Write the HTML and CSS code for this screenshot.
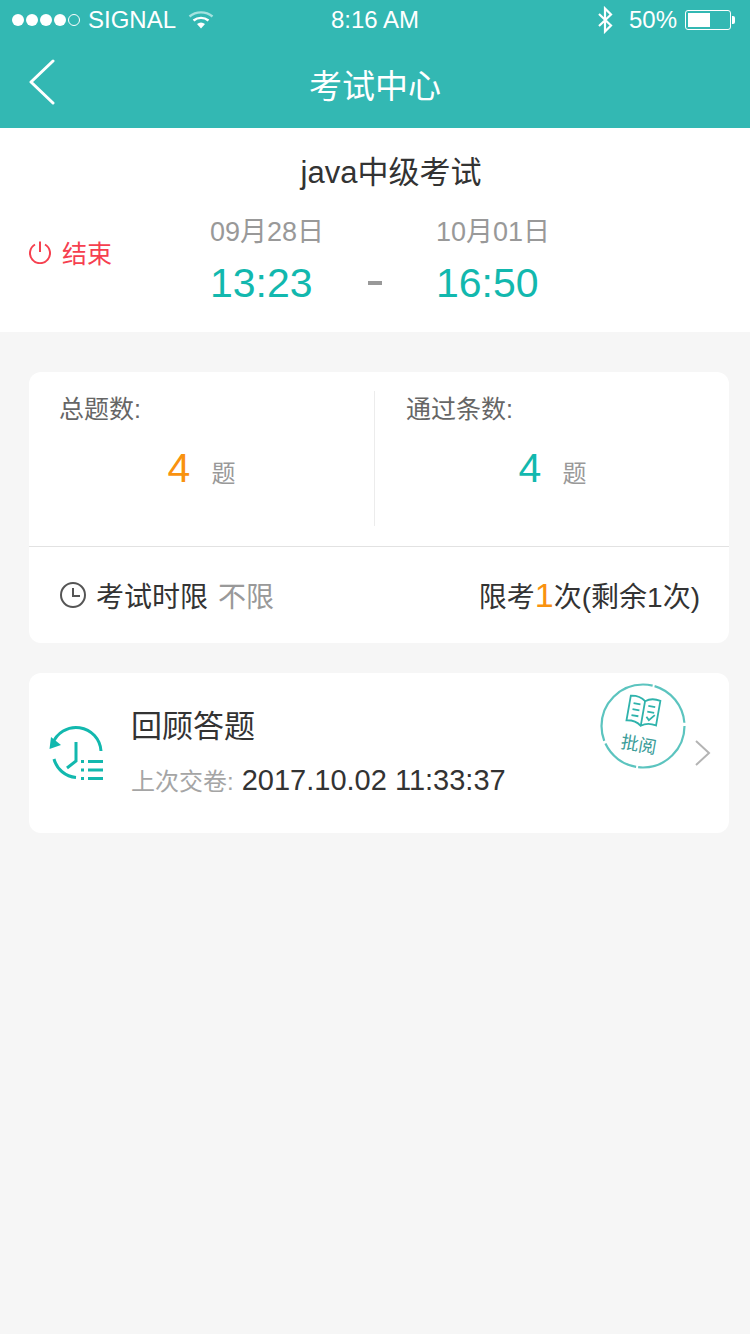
FILE: index.html
```html
<!DOCTYPE html>
<html lang="zh-CN">
<head>
    <meta charset="UTF-8">
    <meta name="viewport" content="width=device-width, initial-scale=1.0">
    <title>考试中心</title>
    <link rel="stylesheet" href="styles.css">
</head>
<body>
    <div class="header">
        <div class="status-bar">
            <div class="status-left">
                <span class="signal">
                    <i class="dot"></i><i class="dot"></i><i class="dot"></i><i class="dot"></i><i class="dot empty"></i>
                </span>
                <span class="carrier">SIGNAL</span>
                <svg class="wifi" width="26" height="20" viewBox="0 0 26 20">
                    <path d="M1.5 6.5C8 1 18 1 24.500 6.500" fill="none" stroke="#a5e2df" stroke-width="2.400"/>
                    <path d="M5.500 10.500C10 7 16 7 20.500 10.500" fill="none" stroke="#fff" stroke-width="2.400"/>
                    <path d="M9 14C11.500 12 14.500 12 17 14L13 18.500Z" fill="#fff"/>
                </svg>
            </div>
            <div class="status-time">8:16 AM</div>
            <div class="status-right">
                <svg class="bluetooth" width="18" height="28" viewBox="0 0 18 28">
                    <path d="M3 8L15 19.500L9 25.500V2.500L15 8.500L3 20" fill="none" stroke="#fff" stroke-width="2.200"/>
                </svg>
                <span class="battery-text">50%</span>
                <span class="battery"><span class="battery-fill"></span></span>
                <span class="battery-cap"></span>
            </div>
        </div>
        <div class="nav">
            <svg class="back" width="26" height="46" viewBox="0 0 26 46">
                <path d="M24 2L2 23L24 44" fill="none" stroke="#fff" stroke-width="3" stroke-linecap="round" stroke-linejoin="round"/>
            </svg>
            <h1>考试中心</h1>
        </div>
    </div>

    <div class="exam-info">
        <h2>java中级考试</h2>
        <div class="exam-row">
            <div class="exam-state">
                <svg width="24" height="24" viewBox="0 0 24 24">
                    <path d="M7 4.500A10 10 0 1 0 17 4.500M12 1.500V12" fill="none" stroke="#f6404f" stroke-width="2"/>
                </svg>
                <span>结束</span>
            </div>
            <div class="exam-time start">
                <div class="date">09月28日</div>
                <div class="time">13:23</div>
            </div>
            <div class="time-sep"></div>
            <div class="exam-time end">
                <div class="date">10月01日</div>
                <div class="time">16:50</div>
            </div>
        </div>
    </div>

    <div class="card stats-card">
        <div class="stats">
            <div class="stat">
                <div class="stat-label">总题数:</div>
                <div class="stat-value"><span class="num orange">4</span><span class="unit">题</span></div>
            </div>
            <div class="stat">
                <div class="stat-label">通过条数:</div>
                <div class="stat-value"><span class="num teal">4</span><span class="unit">题</span></div>
            </div>
        </div>
        <div class="limits">
            <div class="limit-time">
                <svg width="28" height="28" viewBox="0 0 28 28">
                    <circle cx="14" cy="14" r="12" fill="none" stroke="#555" stroke-width="2"/>
                    <path d="M14 7V15H21" fill="none" stroke="#555" stroke-width="2"/>
                </svg>
                <span class="limit-label">考试时限</span>
                <span class="limit-value">不限</span>
            </div>
            <div class="limit-count">限考<span class="limit-num">1</span>次(剩余1次)</div>
        </div>
    </div>

    <div class="card review-card">
        <svg class="review-icon" width="56" height="56" viewBox="0 0 56 56">
            <path d="M3.500 19A25 25 0 0 1 52 26" fill="none" stroke="#12b8ae" stroke-width="3"/>
            <path d="M2 12L12 20L0.500 24Z" fill="#12b8ae"/>
            <path d="M5 34A25 25 0 0 0 27 52.500" fill="none" stroke="#12b8ae" stroke-width="3"/>
            <path d="M27 17V36L18 43" fill="none" stroke="#12b8ae" stroke-width="3"/>
            <path d="M32 36.500H35M39 36.500H54M32 45H35M39 45H54M32 53.500H35M39 53.500H54" fill="none" stroke="#12b8ae" stroke-width="3"/>
        </svg>
        <div class="review-text">
            <div class="review-title">回顾答题</div>
            <div class="review-sub"><span class="review-label">上次交卷:</span> 2017.10.02 11:33:37</div>
        </div>
        <div class="stamp">
            <svg width="86" height="86" viewBox="0 0 86 86">
                <circle cx="43" cy="43" r="41.500" fill="none" stroke="#5cc4bf" stroke-width="2.200" stroke-dasharray="70 2 40 3 90 2 50 4"/>
                <g transform="rotate(10 43 30)" fill="none" stroke="#2fb3ac" stroke-width="1.800">
                    <path d="M43 18C38 14 33 14 28 15V40C33 39 38 39 43 43C48 39 53 39 58 40V15C53 14 48 14 43 18V43"/>
                    <path d="M32 22H39M32 28H39M32 34H39M47 22H54M47 28H54M47 33L50 36L55 30"/>
                </g>
            </svg>
            <span class="stamp-text">批阅</span>
        </div>
        <svg class="chevron" width="18" height="28" viewBox="0 0 18 28">
            <path d="M2 2L15 14L2 26" fill="none" stroke="#b4b4b4" stroke-width="2"/>
        </svg>
    </div>
</body>
</html>
```

FILE: styles.css
```css
:root {
    --header-color: #33b8b3;
    --teal-color: #12b8ae;
    --orange-color: #f9920f;
    --danger-color: #f6404f;
}

* {
    margin: 0;
    padding: 0;
    box-sizing: border-box;
    font-family: "Liberation Sans", "Noto Sans CJK SC", sans-serif;
}

body {
    background-color: #f6f6f6;
    color: #333;
    min-height: 1334px;
}

svg {
    display: block;
    flex-shrink: 0;
}

.header {
    background-color: var(--header-color);
    color: white;
    height: 128px;
}

.status-bar {
    height: 40px;
    padding: 0 15px 0 12px;
    display: flex;
    align-items: center;
    justify-content: space-between;
    font-size: 24px;
    position: relative;
}

.status-left,
.status-right {
    display: flex;
    align-items: center;
}

.signal {
    display: flex;
    gap: 2px;
    margin-right: 8px;
}

.dot {
    width: 12px;
    height: 12px;
    border-radius: 50%;
    background: white;
}

.dot.empty {
    background: none;
    border: 1px solid white;
}

.wifi {
    margin-left: 12px;
}

.status-time {
    position: absolute;
    left: 0;
    right: 0;
    text-align: center;
}

.bluetooth {
    margin-right: 15px;
}

.battery {
    width: 46px;
    height: 20px;
    margin-left: 8px;
    border: 1px solid white;
    border-radius: 3px;
    padding: 2px;
    display: block;
}

.battery-fill {
    display: block;
    width: 22px;
    height: 14px;
    background: white;
}

.battery-cap {
    width: 3px;
    height: 8px;
    margin-left: 1px;
    background: white;
    border-radius: 0 2px 2px 0;
}

.nav {
    height: 88px;
    display: flex;
    align-items: center;
    justify-content: center;
    position: relative;
}

.nav h1 {
    font-size: 33px;
    font-weight: normal;
}

.back {
    position: absolute;
    left: 29px;
    top: 19px;
}

.exam-info {
    background: white;
    height: 204px;
    padding-top: 24px;
}

.exam-info h2 {
    font-size: 31px;
    font-weight: normal;
    line-height: 42px;
    text-align: center;
    padding-left: 32px;
    color: #333;
}

.exam-row {
    display: flex;
    margin-top: 20px;
}

.exam-state {
    width: 210px;
    padding-left: 28px;
    padding-top: 5px;
    display: flex;
    align-items: center;
    gap: 10px;
    color: var(--danger-color);
    font-size: 25px;
    height: 70px;
}

.exam-time {
    width: 130px;
}

.date {
    font-size: 27px;
    line-height: 36px;
    color: #999;
}

.time {
    font-size: 41px;
    line-height: 48px;
    margin-top: 9px;
    color: var(--teal-color);
}

.time-sep {
    width: 14px;
    height: 4px;
    background: #999;
    margin: 67px 54px 0 28px;
}

.card {
    background: white;
    border-radius: 12px;
    margin: 0 21px 0 29px;
}

.stats-card {
    margin-top: 40px;
    height: 271px;
}

.stats {
    height: 175px;
    padding-top: 19px;
    display: flex;
    border-bottom: 1px solid #e2e2e2;
}

.stat {
    width: 346px;
    height: 135px;
    padding-left: 30px;
    border-right: 1px solid #ececec;
}

.stat + .stat {
    flex: 1;
    padding-left: 31px;
    border-right: none;
}

.stat-label {
    font-size: 25px;
    line-height: 36px;
    color: #666;
}

.stat-value {
    margin-top: 17px;
    display: flex;
    align-items: baseline;
    justify-content: center;
    padding-right: 30px;
}

.num {
    font-size: 41px;
    line-height: 48px;
}

.orange {
    color: var(--orange-color);
}

.teal {
    color: var(--teal-color);
}

.unit {
    font-size: 24px;
    color: #999;
    margin-left: 21px;
}

.limits {
    height: 95px;
    padding: 0 29px 0 30px;
    display: flex;
    align-items: center;
    justify-content: space-between;
    font-size: 28px;
    color: #333;
}

.limit-time {
    display: flex;
    align-items: center;
}

.limit-label {
    margin-left: 9px;
}

.limit-value {
    margin-left: 10px;
    color: #999;
}

.limit-num {
    color: var(--orange-color);
    font-size: 34px;
}

.review-card {
    margin-top: 30px;
    height: 160px;
    display: flex;
    align-items: center;
    position: relative;
}

.review-icon {
    margin-left: 20px;
}

.review-text {
    margin-left: 26px;
}

.review-title {
    font-size: 31px;
    line-height: 42px;
    color: #333;
}

.review-sub {
    margin-top: 14px;
    font-size: 29px;
    line-height: 36px;
    color: #333;
}

.review-label {
    font-size: 24px;
    color: #a5a5a5;
}

.stamp {
    position: absolute;
    left: 571px;
    top: 10px;
    width: 86px;
    height: 86px;
}

.stamp-text {
    position: absolute;
    left: 21px;
    top: 47px;
    font-size: 18px;
    color: #3a9c98;
    transform: rotate(10deg);
}

.chevron {
    position: absolute;
    left: 665px;
    top: 66px;
}
```
